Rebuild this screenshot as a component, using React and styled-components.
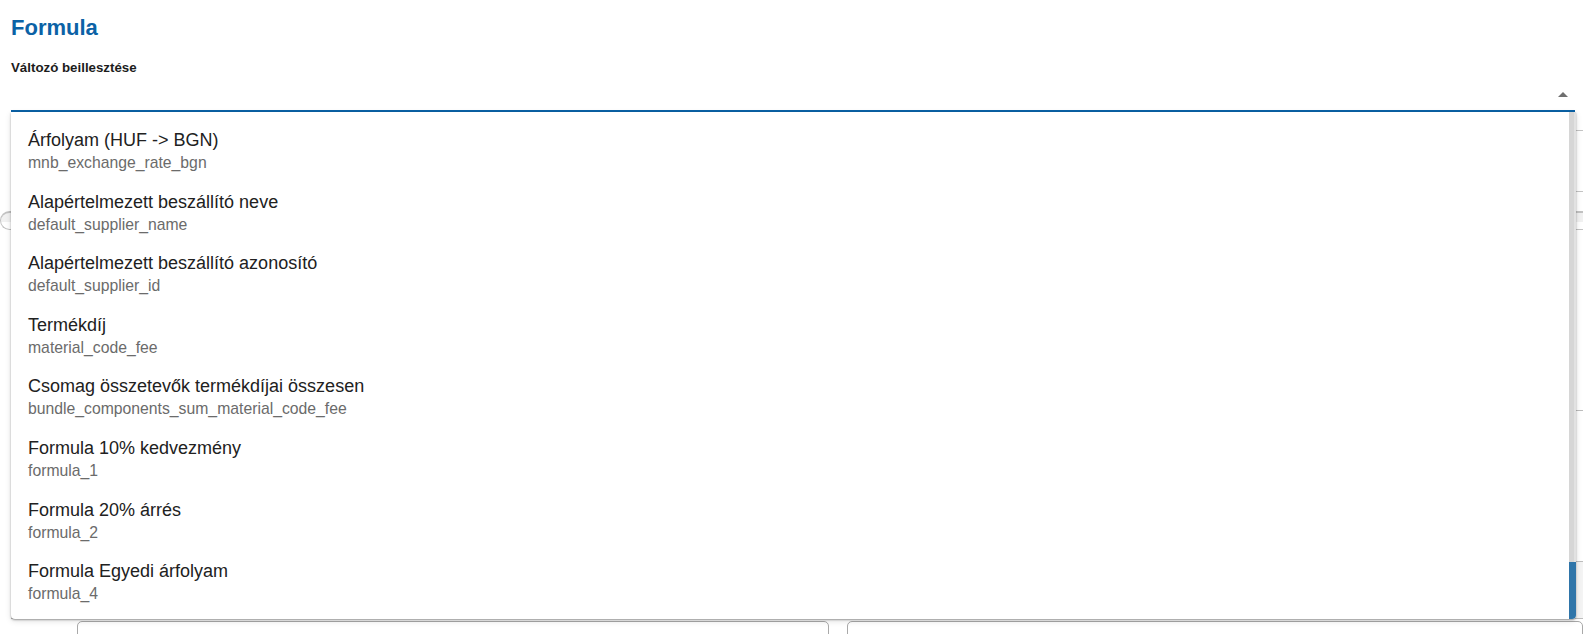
import React from 'react'
import styled, { createGlobalStyle } from 'styled-components'

const GlobalStyle = createGlobalStyle`
  html, body {
    margin: 0;
    padding: 0;
    background: #ffffff;
    overflow: hidden;
    font-family: "Liberation Sans", Arial, sans-serif;
  }
`

const variables = [
  { label: 'Árfolyam (HUF -> BGN)', key: 'mnb_exchange_rate_bgn' },
  { label: 'Alapértelmezett beszállító neve', key: 'default_supplier_name' },
  { label: 'Alapértelmezett beszállító azonosító', key: 'default_supplier_id' },
  { label: 'Termékdíj', key: 'material_code_fee' },
  { label: 'Csomag összetevők termékdíjai összesen', key: 'bundle_components_sum_material_code_fee' },
  { label: 'Formula 10% kedvezmény', key: 'formula_1' },
  { label: 'Formula 20% árrés', key: 'formula_2' },
  { label: 'Formula Egyedi árfolyam', key: 'formula_4' },
]

const Page = styled.div`
  width: 1583px;
  height: 634px;
  box-sizing: border-box;
  padding: 0 8px 0 11px;
  overflow: hidden;
`

const Title = styled.h2`
  margin: 13.6px 0 0;
  font-size: 22px;
  line-height: 27px;
  font-weight: 700;
  color: #0b62a6;
`

const FieldLabel = styled.div`
  margin-top: 19px;
  font-size: 13.3px;
  line-height: 16px;
  font-weight: 700;
  color: #1c1c1c;
`

const Autocomplete = styled.div`
  position: relative;
  z-index: 5;
`

const InputRow = styled.div`
  height: 36.4px;
  display: flex;
  align-items: flex-end;
  justify-content: flex-end;
  padding: 0 7px 13px 0;
  box-sizing: border-box;
  border-bottom: 2px solid #0b62a6;
`

const ArrowUp = styled.span`
  width: 0;
  height: 0;
  border-left: 5.5px solid transparent;
  border-right: 5.5px solid transparent;
  border-bottom: 5.5px solid #6f6f6f;
`

const Menu = styled.div`
  position: absolute;
  top: 100%;
  left: 0;
  right: -1px;
  height: 507px;
  display: flex;
  background: #ffffff;
  border-radius: 0 0 4px 4px;
  box-shadow: 0 1px 2px rgba(0, 0, 0, 0.35), 0 2px 6px rgba(0, 0, 0, 0.12);
  overflow: hidden;
`

const List = styled.ul`
  flex: 1;
  list-style: none;
  margin: 0;
  padding: 6.8px 0 0;
`

const Option = styled.li`
  padding: 8.3px 17px;
  display: flex;
  flex-direction: column;
`

const OptionTitle = styled.span`
  font-size: 18px;
  line-height: 27px;
  color: #212121;
`

const OptionKey = styled.span`
  font-size: 15.75px;
  line-height: 18px;
  color: #6b6b6b;
`

const ScrollTrack = styled.div`
  width: 7px;
  display: flex;
  flex-direction: column;
  justify-content: flex-end;
  background: linear-gradient(to right, #d6d6d6 0, #d6d6d6 5px, #e2e2e2 5px);
`

const ScrollThumb = styled.div`
  height: 57px;
  background: #2f75a9;
  border-radius: 0 0 3px 0;
`

const Backdrop = styled.div`
  display: flex;
  flex-direction: column;
  margin-left: -11px;
  margin-right: -8px;
`

const OutlineRow = styled.div`
  margin: 18px 0 0 11px;
  height: 60px;
  border-top: 1px solid #c4c4c4;
  border-bottom: 1px solid #c4c4c4;
`

const Panel = styled.div`
  margin-top: 19px;
  display: flex;
  flex-direction: column;
`

const PanelHeader = styled.div`
  height: 16px;
  border: 1px solid #c2c2c2;
  border-top-width: 2px;
  border-right: none;
  border-radius: 10px 0 0 10px;
  background: linear-gradient(to bottom, #f1f1f1 0, #f1f1f1 9px, #ffffff 9px);
`

const PanelLine = styled.div`
  margin-left: 11px;
  height: ${({ $gap }) => $gap}px;
  border-bottom: 1px solid #bdbdbd;
`

const ShadedBlock = styled.div`
  margin: 150px 0 0 11px;
  height: 56px;
  background: #f4f4f4;
  border-top: 1px solid #bdbdbd;
  border-bottom: 1px solid #bdbdbd;
`

const InputsRow = styled.div`
  display: grid;
  grid-template-columns: 752px 1fr;
  gap: 18px;
  padding: 2px 0 0 77px;
`

const GhostInput = styled.div`
  height: 40px;
  border: 1px solid #a9a9a9;
  border-radius: 5px 5px 0 0;
`

export default function App() {
  return (
    <>
      <GlobalStyle />
      <Page>
        <Title>Formula</Title>
        <FieldLabel>Változó beillesztése</FieldLabel>
        <Autocomplete>
          <InputRow>
            <ArrowUp />
          </InputRow>
          <Menu>
            <List>
              {variables.map((v) => (
                <Option key={v.key}>
                  <OptionTitle>{v.label}</OptionTitle>
                  <OptionKey>{v.key}</OptionKey>
                </Option>
              ))}
            </List>
            <ScrollTrack>
              <ScrollThumb />
            </ScrollTrack>
          </Menu>
        </Autocomplete>
        <Backdrop>
          <OutlineRow />
          <Panel>
            <PanelHeader />
            <PanelLine $gap={180} />
            <ShadedBlock />
            <InputsRow>
              <GhostInput />
              <GhostInput />
            </InputsRow>
          </Panel>
        </Backdrop>
      </Page>
    </>
  )
}
